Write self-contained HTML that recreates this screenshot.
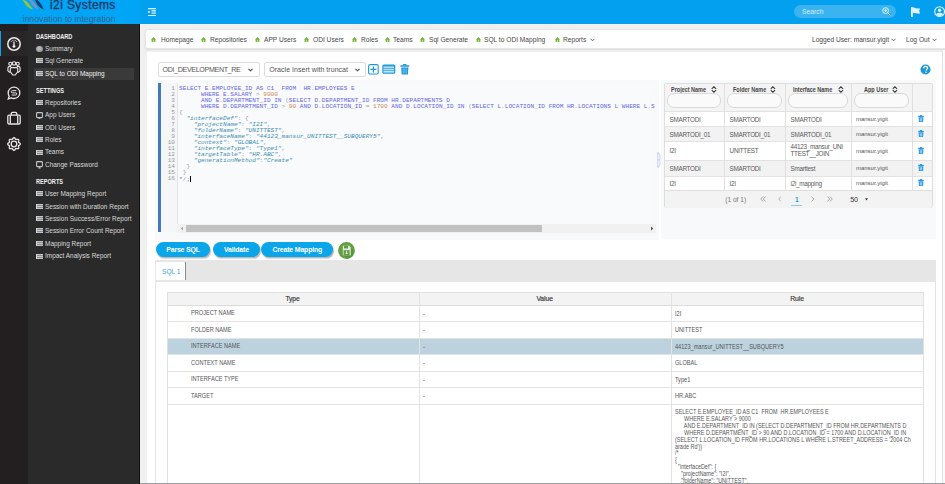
<!DOCTYPE html>
<html><head><meta charset="utf-8">
<style>
*{box-sizing:border-box;margin:0;padding:0}
html,body{width:945px;height:484px;overflow:hidden;background:#f0f0f0;font-family:"Liberation Sans",sans-serif;color:#555}
.abs{position:absolute}
#hdr{left:0;top:0;width:945px;height:24px;background:#02a0ee}
#logo{left:0;top:0;width:140px;height:24px;background:#00a6f5}
#icol{left:0;top:24px;width:28px;height:460px;background:#231f20}
#side{left:28px;top:24px;width:111px;height:460px;background:#2a2a2a}
#sedge{left:139px;top:24px;width:1px;height:460px;background:#111}
.sh{position:absolute;left:36px;font-size:7px;font-weight:bold;color:#f2f2f2;transform:scaleX(0.8);transform-origin:0 0;white-space:nowrap}
.si{position:absolute;left:45px;font-size:7.1px;color:#dadada;transform:scaleX(0.91);transform-origin:0 0;white-space:nowrap}
.lico{position:absolute;left:36px;width:7px;height:5px;background:linear-gradient(#c6c6c6 0 1px,#8c8c8c 1px 2px,#c6c6c6 2px 3px,#8c8c8c 3px 4px,#c6c6c6 4px 5px);box-shadow:inset 1px 0 0 #d8d8d8}
.bc{position:absolute;top:34.7px;font-size:7.8px;color:#474747;white-space:nowrap;transform:scaleX(0.85);transform-origin:0 0}
.home{position:absolute;top:36.9px;width:5px;height:5px}

/*C0*/
.dtx{font-size:7.1px;color:#555;white-space:nowrap;letter-spacing:0}
.code{font-family:"Liberation Mono",monospace;font-size:6.1px;line-height:6px;white-space:pre;color:#333}
.code div{height:6px}
.code:first-of-type{}
.rth{font-size:6.3px;font-weight:bold;color:#444;white-space:nowrap;transform:scaleX(0.87);transform-origin:0 0}
.rtd{font-size:6.3px;color:#5a5a5a;white-space:nowrap;letter-spacing:-0.25px}
.rtu{font-size:6px;color:#555;white-space:nowrap}
.pg{font-size:8px;color:#999}
.btn{height:15.5px;border-radius:8px;background:#0ba5ea;color:#fff;font-size:6.9px;font-weight:bold;text-align:center;line-height:15.5px;box-shadow:1px 1.6px 1px rgba(110,95,85,0.45);letter-spacing:-0.15px;white-space:nowrap}
.th{font-size:6.8px;color:#333;text-align:center;letter-spacing:-0.1px;-webkit-text-stroke:0.15px #333}
.td{font-size:6.3px;color:#555;white-space:nowrap;letter-spacing:0;transform:scaleX(0.89);transform-origin:0 0}
.long{white-space:pre;line-height:6.85px;font-size:6.5px;letter-spacing:0;transform:scaleX(0.84);transform-origin:0 0}
/*C1*/</style></head><body>
<!-- header -->
<div id="hdr" class="abs"></div>
<div id="logo" class="abs"></div>
<svg class="abs" style="left:22px;top:-1px" width="24" height="12" viewBox="0 0 24 12">
 <path d="M0.5 1 C3 0.5,6 2.5,11 10.5 C8.5 10.2,5 8,3.5 5.5 C2.5 4,1.5 2.5,0.5 1Z" fill="#8cc63e"/>
 <path d="M6.5 0.2 C9.5 0.2,12.5 3,16.5 10.3 C14 10,11 7.5,9.5 5 C8.5 3.5,7.5 1.8,6.5 0.2Z" fill="#7b90c6"/>
 <path d="M12.5 0 C15.5 0.5,18.5 3,22 10.5 C19.5 10.2,16.5 7.5,15 5 C14 3.5,13.5 2,12.5 0Z" fill="#1d3a6b"/>
</svg>
<div class="abs" style="left:50px;top:-1.6px;font-size:12px;color:#1b3868;white-space:nowrap;letter-spacing:0.4px;-webkit-text-stroke:0.35px #1b3868">i2i Systems</div>
<div class="abs" style="left:22.5px;top:13.5px;font-size:8.9px;color:#386290;letter-spacing:-0.05px;white-space:nowrap">innovation to integration</div>
<!-- hamburger -->
<svg class="abs" style="left:147.8px;top:7.9px" width="8" height="8.2" viewBox="0 0 8 8.2">
 <rect x="0" y="0" width="8" height="1.3" fill="#e2f4fd"/>
 <rect x="0" y="3.1" width="1.7" height="1.8" fill="#e2f4fd"/>
 <rect x="3.5" y="2.1" width="4.5" height="1" fill="#c6e9fb"/><rect x="3.5" y="3.5" width="4.5" height="1" fill="#c6e9fb"/><rect x="3.5" y="4.9" width="4.5" height="0.9" fill="#c6e9fb"/>
 <rect x="0" y="7" width="8" height="1.1" fill="#e2f4fd"/>
</svg>
<!-- search -->
<div class="abs" style="left:794px;top:5px;width:102px;height:13px;border-radius:7px;background:#3bb3f0"></div>
<div class="abs" style="left:802px;top:7.5px;font-size:6.8px;color:#d5eefc;white-space:nowrap">Search</div>
<svg class="abs" style="left:882px;top:7px" width="9" height="9" viewBox="0 0 9 9">
 <circle cx="3.6" cy="3.6" r="2.9" fill="none" stroke="#e6f5fd" stroke-width="1"/>
 <path d="M2.2 3.6h2.8M3.6 2.2v2.8M5.7 5.7l2.6 2.6" stroke="#e6f5fd" stroke-width="1"/>
</svg>
<svg class="abs" style="left:911px;top:6.8px" width="10" height="10.2" viewBox="0 0 10 10.2">
 <rect x="0" y="0" width="1.8" height="10" fill="#e6f5fd"/>
 <path d="M1.6 0.7 C3 0.4,4 0.8,4.8 1.3 C6 1.6,7.5 1.5,9.1 1.4 L8.1 3.5 L9.1 6.6 C7.5 6.6,6 6.6,4.8 6.3 C4 5.9,3 5.8,1.6 6Z" fill="#e6f5fd"/>
</svg>
<svg class="abs" style="left:933.5px;top:6.3px" width="11.2" height="11.2" viewBox="0 0 11.2 11.2">
 <defs><clipPath id="uc"><circle cx="5.6" cy="5.6" r="4.3"/></clipPath></defs>
 <circle cx="5.6" cy="5.6" r="4.9" fill="none" stroke="#e6f5fd" stroke-width="1.1"/>
 <g clip-path="url(#uc)" fill="#e6f5fd"><circle cx="5.6" cy="4.2" r="1.7"/><ellipse cx="5.6" cy="10" rx="3.8" ry="3.3"/></g>
</svg>

<!-- left icon column -->
<div id="icol" class="abs"></div>
<div class="abs" style="left:0;top:31px;width:28px;height:25px;background:#2a2627"></div>
<div class="abs" style="left:0;top:31px;width:1.3px;height:25px;background:#0aa4ee"></div>
<svg class="abs" style="left:7px;top:37px" width="14" height="14" viewBox="0 0 14 14">
 <circle cx="7" cy="7" r="6.2" fill="none" stroke="#eee" stroke-width="1.5"/>
 <path d="M7 4.6v3.4" stroke="#eee" stroke-width="1.3"/><circle cx="7" cy="9.4" r="1.4" fill="#eee"/>
 <circle cx="4.3" cy="4.6" r="0.55" fill="#ccc"/><circle cx="5.6" cy="3.5" r="0.55" fill="#ccc"/><circle cx="7" cy="3.1" r="0.55" fill="#ccc"/><circle cx="8.4" cy="3.5" r="0.55" fill="#ccc"/><circle cx="9.7" cy="4.6" r="0.55" fill="#ccc"/>
</svg>
<svg class="abs" style="left:7px;top:61px" width="14" height="15" viewBox="0 0 14 15" fill="none" stroke="#e6e6e6" stroke-width="1.15">
 <circle cx="3.3" cy="2.8" r="1.55"/><circle cx="7" cy="2.4" r="1.7"/><circle cx="10.7" cy="2.8" r="1.55"/>
 <path d="M0.9 10V7.3c0-1.1.8-1.9 1.9-1.9h1.4M13.1 10V7.3c0-1.1-.8-1.9-1.9-1.9H9.8M0.9 10l2.2 1.4M13.1 10l-2.2 1.4"/>
 <path d="M4.3 6.6h5.4c.6 0 1 .4 1 1v3.3L8.2 14H5.8L3.3 10.9V7.6c0-.6.4-1 1-1z"/>
</svg>
<svg class="abs" style="left:7px;top:86px" width="14" height="14" viewBox="0 0 14 14" fill="none" stroke="#e6e6e6" stroke-width="1.3">
 <path d="M7 1.2c3.3 0 5.8 2.5 5.8 5.7s-2.5 5.6-5.8 5.6c-1.1 0-2-.2-2.8-.6l-2.9 1 .8-2.6C1.6 9.2 1.2 8.1 1.2 6.9 1.2 3.7 3.7 1.2 7 1.2z"/>
 <path d="M9.3 4.6H5.4a1.1 1.1 0 0 0 0 2.2h3.2a1.1 1.1 0 0 1 0 2.2H4.7" stroke-width="1"/>
</svg>
<svg class="abs" style="left:7px;top:111px" width="14" height="14" viewBox="0 0 14 14" fill="none" stroke="#e6e6e6" stroke-width="1.3">
 <rect x="0.8" y="4.2" width="12.4" height="8.8" rx="1.2"/><path d="M4.3 4.2v-1.6a1.2 1.2 0 0 1 1.2-1.2h3a1.2 1.2 0 0 1 1.2 1.2v1.6M3.3 4.5v8.3M10.7 4.5v8.3"/>
</svg>
<svg class="abs" style="left:7px;top:136.5px" width="14" height="14" viewBox="0 0 14 14" fill="none" stroke="#e6e6e6" stroke-width="1.3">
 <path d="M13.30 7.00L13.26 7.25L13.15 7.48L12.97 7.71L12.74 7.91L12.49 8.09L12.23 8.26L11.99 8.41L11.79 8.56L11.63 8.71L11.53 8.88L11.48 9.07L11.49 9.29L11.53 9.54L11.59 9.81L11.66 10.11L11.71 10.42L11.72 10.72L11.69 11.00L11.60 11.25L11.45 11.45L11.25 11.60L11.00 11.69L10.72 11.72L10.42 11.71L10.11 11.66L9.81 11.59L9.54 11.53L9.29 11.49L9.07 11.48L8.88 11.53L8.71 11.63L8.56 11.79L8.41 11.99L8.26 12.23L8.09 12.49L7.91 12.74L7.71 12.97L7.48 13.15L7.25 13.26L7.00 13.30L6.75 13.26L6.52 13.15L6.29 12.97L6.09 12.74L5.91 12.49L5.74 12.23L5.59 11.99L5.44 11.79L5.29 11.63L5.12 11.53L4.93 11.48L4.71 11.49L4.46 11.53L4.19 11.59L3.89 11.66L3.58 11.71L3.28 11.72L3.00 11.69L2.75 11.60L2.55 11.45L2.40 11.25L2.31 11.00L2.28 10.72L2.29 10.42L2.34 10.11L2.41 9.81L2.47 9.54L2.51 9.29L2.52 9.07L2.47 8.88L2.37 8.71L2.21 8.56L2.01 8.41L1.77 8.26L1.51 8.09L1.26 7.91L1.03 7.71L0.85 7.48L0.74 7.25L0.70 7.00L0.74 6.75L0.85 6.52L1.03 6.29L1.26 6.09L1.51 5.91L1.77 5.74L2.01 5.59L2.21 5.44L2.37 5.29L2.47 5.12L2.52 4.93L2.51 4.71L2.47 4.46L2.41 4.19L2.34 3.89L2.29 3.58L2.28 3.28L2.31 3.00L2.40 2.75L2.55 2.55L2.75 2.40L3.00 2.31L3.28 2.28L3.58 2.29L3.89 2.34L4.19 2.41L4.46 2.47L4.71 2.51L4.93 2.52L5.12 2.47L5.29 2.37L5.44 2.21L5.59 2.01L5.74 1.77L5.91 1.51L6.09 1.26L6.29 1.03L6.52 0.85L6.75 0.74L7.00 0.70L7.25 0.74L7.48 0.85L7.71 1.03L7.91 1.26L8.09 1.51L8.26 1.77L8.41 2.01L8.56 2.21L8.71 2.37L8.88 2.47L9.07 2.52L9.29 2.51L9.54 2.47L9.81 2.41L10.11 2.34L10.42 2.29L10.72 2.28L11.00 2.31L11.25 2.40L11.45 2.55L11.60 2.75L11.69 3.00L11.72 3.28L11.71 3.58L11.66 3.89L11.59 4.19L11.53 4.46L11.49 4.71L11.48 4.93L11.53 5.12L11.63 5.29L11.79 5.44L11.99 5.59L12.23 5.74L12.49 5.91L12.74 6.09L12.97 6.29L13.15 6.52L13.26 6.75L13.30 7.00Z"/><circle cx="7" cy="7" r="2.8"/>
</svg>

<!-- sidebar -->
<div id="side" class="abs"></div>
<div id="sedge" class="abs"></div>
<div class="abs" style="left:34px;top:67.7px;width:100px;height:12.5px;background:#3a3a3a"></div>
<div class="sh" style="top:33.05px">DASHBOARD</div>
<div class="abs" style="left:36px;top:45.60px;width:6.6px;height:6.6px;border-radius:50%;background:radial-gradient(circle at 40% 40%,#bdbdbd,#8a8a8a)"></div>
<div class="si" style="top:44.90px;">Summary</div>
<div class="lico" style="top:58px"></div>
<div class="si" style="top:57.20px;">Sql Generate</div>
<div class="lico" style="top:71px"></div>
<div class="si" style="top:69.70px;color:#f2f2f2">SQL to ODI Mapping</div>
<div class="sh" style="top:86.95px">SETTINGS</div>
<div class="lico" style="top:100px"></div>
<div class="si" style="top:98.70px;">Repositories</div>
<svg class="abs" style="left:36px;top:111.50px" width="7" height="7.5" viewBox="0 0 7 7.5"><rect x="0.6" y="0.6" width="5.8" height="5" rx="0.8" fill="none" stroke="#c8c8c8" stroke-width="1.1"/><path d="M3.5 5.6v1.6M2.2 7.1h2.6" stroke="#c8c8c8" stroke-width="0.8"/></svg>
<div class="si" style="top:111.10px;">App Users</div>
<div class="lico" style="top:125px"></div>
<div class="si" style="top:123.80px;">ODI Users</div>
<div class="lico" style="top:137px"></div>
<div class="si" style="top:136.00px;">Roles</div>
<div class="lico" style="top:150px"></div>
<div class="si" style="top:148.30px;">Teams</div>
<svg class="abs" style="left:36px;top:161.40px" width="7" height="7.5" viewBox="0 0 7 7.5"><rect x="0.6" y="0.6" width="5.8" height="5" rx="0.8" fill="none" stroke="#c8c8c8" stroke-width="1.1"/><path d="M3.5 5.6v1.6M2.2 7.1h2.6" stroke="#c8c8c8" stroke-width="0.8"/></svg>
<div class="si" style="top:161.00px;">Change Password</div>
<div class="sh" style="top:178.3px">REPORTS</div>
<div class="lico" style="top:191px"></div>
<div class="si" style="top:189.80px;">User Mapping Report</div>
<div class="lico" style="top:204px"></div>
<div class="si" style="top:202.50px;">Session with Duration Report</div>
<div class="lico" style="top:216px"></div>
<div class="si" style="top:214.70px;">Session Success/Error Report</div>
<div class="lico" style="top:228px"></div>
<div class="si" style="top:227.30px;">Session Error Count Report</div>
<div class="lico" style="top:241px"></div>
<div class="si" style="top:239.90px;">Mapping Report</div>
<div class="lico" style="top:254px"></div>
<div class="si" style="top:252.40px;">Impact Analysis Report</div>

<!-- MAIN -->
<!-- breadcrumb -->
<div class="abs" style="left:145px;top:29px;width:805px;height:20px;background:#fff;border:1px solid #e6e6e6;border-radius:3px;box-shadow:0 1px 2px rgba(0,0,0,0.08)"></div>
<svg class="home" style="left:151.3px" width="5" height="5" viewBox="0 0 5 5"><path d="M2.5 0L5 2.4H4.4V5H0.6V2.4H0Z" fill="#76b640"/><rect x="2" y="3.2" width="1" height="1.8" fill="#cfe7bd"/></svg>
<div class="bc" style="left:160.6px">Homepage</div>
<svg class="home" style="left:200.5px" width="5" height="5" viewBox="0 0 5 5"><path d="M2.5 0L5 2.4H4.4V5H0.6V2.4H0Z" fill="#76b640"/><rect x="2" y="3.2" width="1" height="1.8" fill="#cfe7bd"/></svg>
<div class="bc" style="left:209.5px">Repositories</div>
<svg class="home" style="left:255px" width="5" height="5" viewBox="0 0 5 5"><path d="M2.5 0L5 2.4H4.4V5H0.6V2.4H0Z" fill="#76b640"/><rect x="2" y="3.2" width="1" height="1.8" fill="#cfe7bd"/></svg>
<div class="bc" style="left:264px">APP Users</div>
<svg class="home" style="left:303.7px" width="5" height="5" viewBox="0 0 5 5"><path d="M2.5 0L5 2.4H4.4V5H0.6V2.4H0Z" fill="#76b640"/><rect x="2" y="3.2" width="1" height="1.8" fill="#cfe7bd"/></svg>
<div class="bc" style="left:312.5px">ODI Users</div>
<svg class="home" style="left:351.8px" width="5" height="5" viewBox="0 0 5 5"><path d="M2.5 0L5 2.4H4.4V5H0.6V2.4H0Z" fill="#76b640"/><rect x="2" y="3.2" width="1" height="1.8" fill="#cfe7bd"/></svg>
<div class="bc" style="left:360.5px">Roles</div>
<svg class="home" style="left:384.6px" width="5" height="5" viewBox="0 0 5 5"><path d="M2.5 0L5 2.4H4.4V5H0.6V2.4H0Z" fill="#76b640"/><rect x="2" y="3.2" width="1" height="1.8" fill="#cfe7bd"/></svg>
<div class="bc" style="left:393.2px">Teams</div>
<svg class="home" style="left:420px" width="5" height="5" viewBox="0 0 5 5"><path d="M2.5 0L5 2.4H4.4V5H0.6V2.4H0Z" fill="#76b640"/><rect x="2" y="3.2" width="1" height="1.8" fill="#cfe7bd"/></svg>
<div class="bc" style="left:428.8px">Sql Generate</div>
<svg class="home" style="left:475.5px" width="5" height="5" viewBox="0 0 5 5"><path d="M2.5 0L5 2.4H4.4V5H0.6V2.4H0Z" fill="#76b640"/><rect x="2" y="3.2" width="1" height="1.8" fill="#cfe7bd"/></svg>
<div class="bc" style="left:484px">SQL to ODI Mapping</div>
<svg class="home" style="left:555.2px" width="5" height="5" viewBox="0 0 5 5"><path d="M2.5 0L5 2.4H4.4V5H0.6V2.4H0Z" fill="#76b640"/><rect x="2" y="3.2" width="1" height="1.8" fill="#cfe7bd"/></svg>
<div class="bc" style="left:563.4px">Reports</div>
<svg class="abs" style="left:589.5px;top:38px" width="5" height="4" viewBox="0 0 5 4"><path d="M0.5 0.8L2.5 2.8L4.5 0.8" fill="none" stroke="#4a4a4a" stroke-width="0.85"/></svg>
<div class="bc" style="left:811.5px">Logged User: mansur.yigit</div>
<svg class="abs" style="left:891px;top:38px" width="5" height="4" viewBox="0 0 5 4"><path d="M0.5 0.8L2.5 2.8L4.5 0.8" fill="none" stroke="#4a4a4a" stroke-width="0.85"/></svg>
<div class="bc" style="left:905.6px">Log Out</div>
<svg class="abs" style="left:931.5px;top:38px" width="5" height="4" viewBox="0 0 5 4"><path d="M0.5 0.8L2.5 2.8L4.5 0.8" fill="none" stroke="#4a4a4a" stroke-width="0.85"/></svg>

<!-- white panel -->
<div class="abs" style="left:147px;top:52px;width:795px;height:432px;background:#fff"></div>
<div class="abs" style="left:942px;top:50px;width:1px;height:434px;background:#e2e2e2"></div>
<div class="abs" style="left:943px;top:50px;width:2px;height:434px;background:#fafafa"></div>
<!--P0--><div class="abs" style="left:157.5px;top:62px;width:102px;height:14.5px;background:#fff;border:1px solid #dcdcdc;border-radius:2px"></div>
<div class="abs dtx" style="left:162.5px;top:66.2px;letter-spacing:-0.33px">ODI_DEVELOPMENT_RE</div>
<svg class="abs" style="left:248.0px;top:67.8px" width="5" height="4" viewBox="0 0 5 4"><path d="M0.5 0.8L2.5 2.8L4.5 0.8" fill="none" stroke="#444" stroke-width="1.1"/></svg>
<div class="abs" style="left:264.2px;top:62px;width:102px;height:14.5px;background:#fff;border:1px solid #dcdcdc;border-radius:2px"></div>
<div class="abs dtx" style="left:269.2px;top:66.2px;">Oracle Insert with truncat</div>
<svg class="abs" style="left:354.7px;top:67.8px" width="5" height="4" viewBox="0 0 5 4"><path d="M0.5 0.8L2.5 2.8L4.5 0.8" fill="none" stroke="#444" stroke-width="1.1"/></svg>
<svg class="abs" style="left:368px;top:64px" width="11" height="11" viewBox="0 0 11 11"><rect x="0.6" y="0.6" width="9.6" height="9.4" rx="1.5" fill="none" stroke="#1a9ad9" stroke-width="1.1"/><path d="M5.4 2.5v6M2.4 5.3h6" stroke="#1a9ad9" stroke-width="1.2"/></svg>
<svg class="abs" style="left:382px;top:64px" width="14" height="11" viewBox="0 0 14 11"><rect x="0.3" y="0.5" width="13" height="9.3" rx="1.5" fill="#1a9ad9"/><rect x="1.5" y="2.4" width="10.6" height="6.2" fill="#bfe3f6"/><path d="M1.5 4.4h10.6M1.5 6.4h10.6" stroke="#1a9ad9" stroke-width="0.7"/></svg>
<svg class="abs" style="left:399.5px;top:64px" width="10" height="11" viewBox="0 0 10 11"><rect x="3.2" y="0" width="3.2" height="1.5" fill="#1a9ad9"/><rect x="0.3" y="1.2" width="9" height="1.6" rx="0.5" fill="#1a9ad9"/><path d="M1.2 3.4h7.2l-0.5 7.2H1.7z" fill="#1a9ad9"/><path d="M3.3 4.4v5M4.8 4.4v5M6.3 4.4v5" stroke="#9fd4f0" stroke-width="0.6"/></svg>
<svg class="abs" style="left:919.5px;top:63.6px" width="11" height="11" viewBox="0 0 11 11"><circle cx="5.5" cy="5.5" r="5.05" fill="#1b9ad6"/><path d="M3.7 4.3c0-1.2.8-1.9 1.9-1.9s1.9.7 1.9 1.7c0 1.1-1.3 1.2-1.3 2.4" fill="none" stroke="#fff" stroke-width="1.4"/><rect x="5.3" y="7.6" width="1.3" height="1.3" fill="#fff"/></svg>
<div class="abs" style="left:155px;top:79.5px;width:503.5px;height:160px;background:#f8f9fb"></div>
<div class="abs" style="left:661px;top:79.5px;width:275px;height:159.5px;background:#f8f9fb"></div>
<div class="abs" style="left:157.8px;top:83.2px;width:3.2px;height:149px;background:#4279b6"></div>
<div class="abs" style="left:161px;top:83.2px;width:16px;height:149px;background:#f5f6f7"></div>
<div class="abs" style="left:177px;top:83.2px;width:0.8px;height:141px;background:#e4e4e4"></div>
<div class="abs" style="left:177.8px;top:83.2px;width:477.5px;height:141px;background:#f9fafc"></div>
<div class="abs" style="left:177px;top:224.3px;width:478.5px;height:8.3px;background:#f1f1f1"></div>
<div class="abs" style="left:186px;top:225.3px;width:355.5px;height:6.3px;background:#c1c1c1"></div>
<svg class="abs" style="left:179.5px;top:226px" width="4" height="5" viewBox="0 0 4 5"><path d="M3 0.5L0.8 2.5L3 4.5z" fill="#a3a3a3"/></svg>
<svg class="abs" style="left:650px;top:226px" width="4" height="5" viewBox="0 0 4 5"><path d="M1 0.5L3.2 2.5L1 4.5z" fill="#505050"/></svg>
<svg class="abs" style="left:657.3px;top:152px" width="4" height="16" viewBox="0 0 4 16"><path d="M0.8 0.3V15.6M0.8 0.3L3 3V12.9L0.8 15.6M1 7.9H2.8" fill="none" stroke="#b4bde8" stroke-width="0.7"/></svg>
<div class="abs code" style="left:161px;top:86px;width:14px;text-align:right;color:#999"><div>1</div><div>2</div><div>3</div><div>4</div><div>5</div><div>6</div><div>7</div><div>8</div><div>9</div><div>10</div><div>11</div><div>12</div><div>13</div><div>14</div><div>15</div><div>16</div></div>
<div class="abs code" style="left:179.1px;top:86px;text-align:left"><div><span style="color:#6565e2">SELECT E<span style="color:#c88a53">.</span>EMPLOYEE_ID AS C1  FROM  HR<span style="color:#c88a53">.</span>EMPLOYEES E</span></div><div><span style="color:#6565e2">      WHERE E<span style="color:#c88a53">.</span>SALARY </span><span style="color:#999">&gt;</span> <span style="color:#c88a53">9000</span></div><div><span style="color:#6565e2">      AND E<span style="color:#c88a53">.</span>DEPARTMENT_ID IN </span><span style="color:#999">(</span><span style="color:#6565e2">SELECT D<span style="color:#c88a53">.</span>DEPARTMENT_ID FROM HR<span style="color:#c88a53">.</span>DEPARTMENTS D</span></div><div><span style="color:#6565e2">      WHERE D<span style="color:#c88a53">.</span>DEPARTMENT_ID </span><span style="color:#999">&gt;</span> <span style="color:#c88a53">90</span><span style="color:#6565e2"> AND D<span style="color:#c88a53">.</span>LOCATION_ID </span><span style="color:#999">=</span> <span style="color:#c88a53">1700</span><span style="color:#6565e2"> AND D<span style="color:#c88a53">.</span>LOCATION_ID IN </span><span style="color:#999">(</span><span style="color:#6565e2">SELECT L<span style="color:#c88a53">.</span>LOCATION_ID FROM HR<span style="color:#c88a53">.</span>LOCATIONS L WHERE L<span style="color:#c88a53">.</span>S</span></div><div><span style="color:#999">{</span></div><div>  <span style="color:#3f8fae;font-style:italic">"interfaceDef"</span><span style="color:#999">: {</span></div><div>    <span style="color:#3f8fae;font-style:italic">"projectName"</span><span style="color:#999">: </span><span style="color:#3f8fae;font-style:italic">"I2I"</span><span style="color:#999">,</span></div><div>    <span style="color:#3f8fae;font-style:italic">"folderName"</span><span style="color:#999">: </span><span style="color:#3f8fae;font-style:italic">"UNITTEST"</span><span style="color:#999">,</span></div><div>    <span style="color:#3f8fae;font-style:italic">"interfaceName"</span><span style="color:#999">: </span><span style="color:#3f8fae;font-style:italic">"44123_mansur_UNITTEST__SUBQUERY5"</span><span style="color:#999">,</span></div><div>    <span style="color:#3f8fae;font-style:italic">"context"</span><span style="color:#999">: </span><span style="color:#3f8fae;font-style:italic">"GLOBAL"</span><span style="color:#999">,</span></div><div>    <span style="color:#3f8fae;font-style:italic">"interfaceType"</span><span style="color:#999">: </span><span style="color:#3f8fae;font-style:italic">"Type1"</span><span style="color:#999">,</span></div><div>    <span style="color:#3f8fae;font-style:italic">"targetTable"</span><span style="color:#999">: </span><span style="color:#3f8fae;font-style:italic">"HR.ABC"</span><span style="color:#999">,</span></div><div>    <span style="color:#3f8fae;font-style:italic">"generationMethod"</span><span style="color:#999">:</span><span style="color:#3f8fae;font-style:italic">"Create"</span></div><div>  <span style="color:#999">}</span></div><div> <span style="color:#999">}</span></div><div><span style="color:#6565e2">*</span><span style="color:#c88a53">/</span><span style="color:#6565e2">;</span><span style="display:inline-block;width:0.8px;height:6px;background:#000;vertical-align:-1px"></span></div></div>
<div class="abs" style="left:664.3px;top:83.2px;width:268.3px;height:125.3px;border:1px solid #dedede;border-radius:2px;background:#fff;overflow:hidden"></div>
<div class="abs" style="left:665px;top:84px;width:267px;height:27.3px;background:#f4f4f4"></div>
<div class="abs" style="left:665px;top:111.3px;width:267px;height:15.0px;background:#fff;border-top:1px solid #e2e2e2"></div>
<div class="abs" style="left:665px;top:126.3px;width:267px;height:15.000000000000014px;background:#f2f2f2;border-top:1px solid #e2e2e2"></div>
<div class="abs" style="left:665px;top:141.3px;width:267px;height:18.69999999999999px;background:#fff;border-top:1px solid #e2e2e2"></div>
<div class="abs" style="left:665px;top:160px;width:267px;height:15.699999999999989px;background:#f2f2f2;border-top:1px solid #e2e2e2"></div>
<div class="abs" style="left:665px;top:175.7px;width:267px;height:14.5px;background:#fff;border-top:1px solid #e2e2e2"></div>
<div class="abs" style="left:665px;top:190.2px;width:267px;height:17.4px;background:#f3f3f3;border-top:1px solid #dedede;border-radius:0 0 2px 2px"></div>
<div class="abs" style="left:724.4px;top:83.7px;width:1px;height:106.5px;background:#e0e0e0"></div>
<div class="abs" style="left:785.3px;top:83.7px;width:1px;height:106.5px;background:#e0e0e0"></div>
<div class="abs" style="left:851.1px;top:83.7px;width:1px;height:106.5px;background:#e0e0e0"></div>
<div class="abs" style="left:912px;top:83.7px;width:1px;height:106.5px;background:#e0e0e0"></div>
<div class="abs rth" style="left:671px;top:85.9px">Project Name</div>
<div class="abs" style="left:667.3px;top:93.4px;width:54.10000000000002px;height:14.2px;border:1px solid #d9d9d9;border-radius:7px;background:#fafafa"></div>
<div class="abs rth" style="left:732.6px;top:85.9px">Folder Name</div>
<div class="abs" style="left:727.4px;top:93.4px;width:54.89999999999998px;height:14.2px;border:1px solid #d9d9d9;border-radius:7px;background:#fafafa"></div>
<div class="abs rth" style="left:792.7px;top:85.9px">Interface Name</div>
<div class="abs" style="left:788.3px;top:93.4px;width:59.80000000000007px;height:14.2px;border:1px solid #d9d9d9;border-radius:7px;background:#fafafa"></div>
<div class="abs rth" style="left:864.2px;top:85.9px">App User</div>
<div class="abs" style="left:854.1px;top:93.4px;width:54.89999999999998px;height:14.2px;border:1px solid #d9d9d9;border-radius:7px;background:#fafafa"></div>
<svg class="abs" style="left:710.5px;top:86px" width="6" height="7" viewBox="0 0 6 7"><path d="M0.7 2.9L2.9 0.8L5.1 2.9M0.7 4.1L2.9 6.2L5.1 4.1" fill="none" stroke="#3a3a3a" stroke-width="1.05"/></svg>
<svg class="abs" style="left:770px;top:86px" width="6" height="7" viewBox="0 0 6 7"><path d="M0.7 2.9L2.9 0.8L5.1 2.9M0.7 4.1L2.9 6.2L5.1 4.1" fill="none" stroke="#3a3a3a" stroke-width="1.05"/></svg>
<svg class="abs" style="left:837.5px;top:86px" width="6" height="7" viewBox="0 0 6 7"><path d="M0.7 2.9L2.9 0.8L5.1 2.9M0.7 4.1L2.9 6.2L5.1 4.1" fill="none" stroke="#3a3a3a" stroke-width="1.05"/></svg>
<svg class="abs" style="left:891.5px;top:86px" width="6" height="7" viewBox="0 0 6 7"><path d="M0.7 2.9L2.9 0.8L5.1 2.9M0.7 4.1L2.9 6.2L5.1 4.1" fill="none" stroke="#3a3a3a" stroke-width="1.05"/></svg>
<div class="abs rtd" style="left:669.5px;top:115.6px">SMARTODI</div>
<div class="abs rtd" style="left:729.6px;top:115.6px">SMARTODI</div>
<div class="abs rtd" style="left:790.5px;top:115.6px">SMARTODI</div>
<div class="abs rtu" style="left:855.9px;top:115.7px">mansur.yigit</div>
<svg class="abs" style="left:917.5px;top:114.8px" width="6" height="7.3" viewBox="0 0 6 7.3"><rect x="2" y="0" width="2" height="1" fill="#2b9be0"/><rect x="0.2" y="0.8" width="5.6" height="1.2" rx="0.3" fill="#2b9be0"/><path d="M0.6 2.3h4.8l-.3 5H0.9z" fill="#2b9be0"/><rect x="1.8" y="3.3" width="2.4" height="3" fill="#8cc9ef"/></svg>
<div class="abs rtd" style="left:669.5px;top:130.60000000000002px">SMARTODI_01</div>
<div class="abs rtd" style="left:729.6px;top:130.60000000000002px">SMARTODI_01</div>
<div class="abs rtd" style="left:790.5px;top:130.60000000000002px">SMARTODI_01</div>
<div class="abs rtu" style="left:855.9px;top:130.70000000000002px">mansur.yigit</div>
<svg class="abs" style="left:917.5px;top:129.8px" width="6" height="7.3" viewBox="0 0 6 7.3"><rect x="2" y="0" width="2" height="1" fill="#2b9be0"/><rect x="0.2" y="0.8" width="5.6" height="1.2" rx="0.3" fill="#2b9be0"/><path d="M0.6 2.3h4.8l-.3 5H0.9z" fill="#2b9be0"/><rect x="1.8" y="3.3" width="2.4" height="3" fill="#8cc9ef"/></svg>
<div class="abs rtd" style="left:669.5px;top:147.45000000000002px">I2I</div>
<div class="abs rtd" style="left:729.6px;top:147.45000000000002px">UNITTEST</div>
<div class="abs rtd" style="left:790.5px;top:144.45000000000002px;line-height:6.7px">44123_mansur_UNI<br>TTEST__JOIN</div>
<div class="abs rtu" style="left:855.9px;top:147.55px">mansur.yigit</div>
<svg class="abs" style="left:917.5px;top:146.65px" width="6" height="7.3" viewBox="0 0 6 7.3"><rect x="2" y="0" width="2" height="1" fill="#2b9be0"/><rect x="0.2" y="0.8" width="5.6" height="1.2" rx="0.3" fill="#2b9be0"/><path d="M0.6 2.3h4.8l-.3 5H0.9z" fill="#2b9be0"/><rect x="1.8" y="3.3" width="2.4" height="3" fill="#8cc9ef"/></svg>
<div class="abs rtd" style="left:669.5px;top:164.65px">SMARTODI</div>
<div class="abs rtd" style="left:729.6px;top:164.65px">SMARTODI</div>
<div class="abs rtd" style="left:790.5px;top:164.65px">Smarttest</div>
<div class="abs rtu" style="left:855.9px;top:164.75px">mansur.yigit</div>
<svg class="abs" style="left:917.5px;top:163.85px" width="6" height="7.3" viewBox="0 0 6 7.3"><rect x="2" y="0" width="2" height="1" fill="#2b9be0"/><rect x="0.2" y="0.8" width="5.6" height="1.2" rx="0.3" fill="#2b9be0"/><path d="M0.6 2.3h4.8l-.3 5H0.9z" fill="#2b9be0"/><rect x="1.8" y="3.3" width="2.4" height="3" fill="#8cc9ef"/></svg>
<div class="abs rtd" style="left:669.5px;top:179.75px">I2I</div>
<div class="abs rtd" style="left:729.6px;top:179.75px">I2I</div>
<div class="abs rtd" style="left:790.5px;top:179.75px">i2i_mapping</div>
<div class="abs rtu" style="left:855.9px;top:179.85px">mansur.yigit</div>
<svg class="abs" style="left:917.5px;top:178.95px" width="6" height="7.3" viewBox="0 0 6 7.3"><rect x="2" y="0" width="2" height="1" fill="#2b9be0"/><rect x="0.2" y="0.8" width="5.6" height="1.2" rx="0.3" fill="#2b9be0"/><path d="M0.6 2.3h4.8l-.3 5H0.9z" fill="#2b9be0"/><rect x="1.8" y="3.3" width="2.4" height="3" fill="#8cc9ef"/></svg>
<div class="abs rtd" style="left:725.2px;top:195.8px;color:#777;font-size:6.6px;letter-spacing:0">(1 of 1)</div>
<svg class="abs" style="left:760.3px;top:196.3px" width="6" height="6" viewBox="0 0 6 6"><path d="M3 0.5L0.7 3L3 5.5M5.6 0.5L3.3 3L5.6 5.5" fill="none" stroke="#9a9a9a" stroke-width="0.8"/></svg>
<svg class="abs" style="left:777.5px;top:196.3px" width="3.5" height="6" viewBox="0 0 3.5 6"><path d="M3 0.5L0.7 3L3 5.5" fill="none" stroke="#9a9a9a" stroke-width="0.8"/></svg>
<svg class="abs" style="left:811.3px;top:196.3px" width="3.5" height="6" viewBox="0 0 3.5 6"><path d="M0.5 0.5L2.8 3L0.5 5.5" fill="none" stroke="#9a9a9a" stroke-width="0.8"/></svg>
<svg class="abs" style="left:826.5px;top:196.3px" width="6" height="6" viewBox="0 0 6 6"><path d="M0.4 0.5L2.7 3L0.4 5.5M3 0.5L5.3 3L3 5.5" fill="none" stroke="#9a9a9a" stroke-width="0.8"/></svg>
<div class="abs rtd" style="left:795px;top:195.8px;color:#2a9de0;font-weight:bold;font-size:6.6px">1</div>
<div class="abs" style="left:790.5px;top:205px;width:11.2px;height:0.8px;background:#8ccbf0"></div>
<div class="abs rtd" style="left:850.3px;top:195.6px;color:#333;font-size:7px;letter-spacing:-0.1px">50</div>
<svg class="abs" style="left:865px;top:198.3px" width="3" height="3" viewBox="0 0 3 3"><path d="M0 0.2H3L1.5 2.6z" fill="#333"/></svg>
<div class="abs btn" style="left:156.3px;top:241.5px;width:53.5px">Parse SQL</div>
<div class="abs btn" style="left:213px;top:241.5px;width:46.80000000000001px">Validate</div>
<div class="abs btn" style="left:261.4px;top:241.5px;width:71.80000000000001px">Create Mapping</div>
<svg class="abs" style="left:337.5px;top:241.5px" width="17" height="17" viewBox="0 0 17 17"><circle cx="8.5" cy="8.5" r="8.4" fill="#62a044"/><path d="M12 5 L15.5 8.5 A8.4 8.4 0 0 1 9.5 16.8 L5.5 13z" fill="#55903a" opacity="0.7"/><path d="M4.8 3.8h6.4l1.6 1.6v7.8H4.8z" fill="#dfe9d8"/><rect x="6" y="3.8" width="4" height="2.6" fill="#5f9b3f"/><rect x="5.6" y="8.2" width="6" height="5" fill="#5f9b3f"/><path d="M8.6 8.8v3.2M7.4 10.8l1.2 1.3 1.2-1.3" stroke="#fff" stroke-width="0.8" fill="none"/></svg>
<div class="abs" style="left:155px;top:260px;width:781px;height:224px;border:1px solid #e3e3e3;background:#fff"></div>
<div class="abs" style="left:155px;top:260px;width:781px;height:21.5px;background:#e6e6e6"></div>
<div class="abs" style="left:155.5px;top:262px;width:30.5px;height:18.3px;background:#fff;border-right:1px solid #8a8a8a"></div>
<div class="abs" style="left:162.1px;top:266.6px;font-size:7.6px;color:#3ba3e3;transform:scaleX(0.87);transform-origin:0 0;white-space:nowrap">SQL 1</div>
<div class="abs" style="left:166.5px;top:292px;width:757px;height:200px;border:1px solid #e0e0e0;border-bottom:none"></div>
<div class="abs" style="left:167.5px;top:293px;width:755px;height:12.6px;background:#f3f3f3;border-bottom:1.8px solid #dcdcdc"></div>
<div class="abs" style="left:418.6px;top:292px;width:1px;height:200px;background:#e3e3e3"></div>
<div class="abs" style="left:670.7px;top:292px;width:1px;height:200px;background:#e3e3e3"></div>
<div class="abs th" style="left:166.5px;top:295px;width:252.10000000000002px">Type</div>
<div class="abs th" style="left:418.6px;top:295px;width:252.10000000000002px">Value</div>
<div class="abs th" style="left:670.7px;top:295px;width:252.79999999999995px">Rule</div>
<div class="abs" style="left:167.5px;top:321.1px;width:755px;height:1px;background:#e3e3e3"></div>
<div class="abs td" style="left:190.7px;top:309.45px">PROJECT NAME</div>
<div class="abs td" style="left:423.2px;top:309.84999999999997px">-</div>
<div class="abs td" style="left:675.4px;top:309.84999999999997px">I2I</div>
<div class="abs" style="left:167.5px;top:337.8px;width:755px;height:1px;background:#e3e3e3"></div>
<div class="abs td" style="left:190.7px;top:325.75000000000006px">FOLDER NAME</div>
<div class="abs td" style="left:423.2px;top:326.15000000000003px">-</div>
<div class="abs td" style="left:675.4px;top:326.15000000000003px">UNITTEST</div>
<div class="abs" style="left:167.5px;top:338.8px;width:755px;height:15.800000000000011px;background:#bcd3df"></div>
<div class="abs" style="left:167.5px;top:354.1px;width:755px;height:1px;background:#e3e3e3"></div>
<div class="abs td" style="left:190.7px;top:342.25000000000006px">INTERFACE NAME</div>
<div class="abs td" style="left:423.2px;top:342.65000000000003px">-</div>
<div class="abs td" style="left:675.4px;top:342.65000000000003px">44123_mansur_UNITTEST__SUBQUERY5</div>
<div class="abs" style="left:167.5px;top:370.8px;width:755px;height:1px;background:#e3e3e3"></div>
<div class="abs td" style="left:190.7px;top:358.75000000000006px">CONTEXT NAME</div>
<div class="abs td" style="left:423.2px;top:359.15000000000003px">-</div>
<div class="abs td" style="left:675.4px;top:359.15000000000003px">GLOBAL</div>
<div class="abs" style="left:167.5px;top:387.1px;width:755px;height:1px;background:#e3e3e3"></div>
<div class="abs td" style="left:190.7px;top:375.25000000000006px">INTERFACE TYPE</div>
<div class="abs td" style="left:423.2px;top:375.65000000000003px">-</div>
<div class="abs td" style="left:675.4px;top:375.65000000000003px">Type1</div>
<div class="abs" style="left:167.5px;top:403.8px;width:755px;height:1px;background:#e3e3e3"></div>
<div class="abs td" style="left:190.7px;top:391.75000000000006px">TARGET</div>
<div class="abs td" style="left:423.2px;top:392.15000000000003px">-</div>
<div class="abs td" style="left:675.4px;top:392.15000000000003px">HR.ABC</div>
<div class="abs" style="left:418.6px;top:292px;width:1px;height:200px;background:#e3e3e3"></div>
<div class="abs" style="left:670.7px;top:292px;width:1px;height:200px;background:#e3e3e3"></div>
<div class="abs td long" style="left:675.4px;top:409.3px">SELECT E.EMPLOYEE_ID AS C1  FROM  HR.EMPLOYEES E
      WHERE E.SALARY &gt; 9000
      AND E.DEPARTMENT_ID IN (SELECT D.DEPARTMENT_ID FROM HR.DEPARTMENTS D
      WHERE D.DEPARTMENT_ID &gt; 90 AND D.LOCATION_ID = 1700 AND D.LOCATION_ID IN
(SELECT L.LOCATION_ID FROM HR.LOCATIONS L WHERE L.STREET_ADDRESS = '2004 Ch
arade Rd'))
/*
{
  "interfaceDef": {
    "projectName": "I2I",
    "folderName": "UNITTEST",
    "interfaceName": "44123_mansur_UNITTEST__SUBQUERY5",</div><!--P1-->
<div class="abs" style="left:140px;top:483px;width:805px;height:1px;background:#9aa0a0"></div>
</body></html>
